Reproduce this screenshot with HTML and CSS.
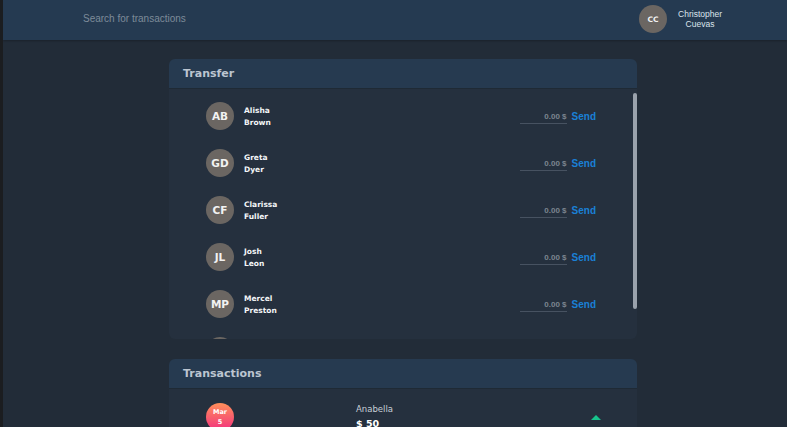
FILE: index.html
```html
<!DOCTYPE html>
<html>
<head>
<meta charset="utf-8">
<link rel="stylesheet" href="styles.css">
</head>
<body>
<div class="app">
  <header class="topbar">
    <div class="search">Search for transactions</div>
    <div class="user">
      <div class="avatar user-avatar">CC</div>
      <div class="user-name">Christopher<br>Cuevas</div>
    </div>
  </header>
  <main class="main">
    <section class="card">
      <div class="card-head">Transfer</div>
      <div class="scroll-wrap">
        <div class="card-body transfer-list">
          <div class="row">
            <div class="person"><div class="avatar">AB</div><div class="pname">Alisha<br>Brown</div></div>
            <div class="action"><div class="amount">0.00 $</div><div class="send">Send</div></div>
          </div>
          <div class="row">
            <div class="person"><div class="avatar">GD</div><div class="pname">Greta<br>Dyer</div></div>
            <div class="action"><div class="amount">0.00 $</div><div class="send">Send</div></div>
          </div>
          <div class="row">
            <div class="person"><div class="avatar">CF</div><div class="pname">Clarissa<br>Fuller</div></div>
            <div class="action"><div class="amount">0.00 $</div><div class="send">Send</div></div>
          </div>
          <div class="row">
            <div class="person"><div class="avatar">JL</div><div class="pname">Josh<br>Leon</div></div>
            <div class="action"><div class="amount">0.00 $</div><div class="send">Send</div></div>
          </div>
          <div class="row">
            <div class="person"><div class="avatar">MP</div><div class="pname">Mercel<br>Preston</div></div>
            <div class="action"><div class="amount">0.00 $</div><div class="send">Send</div></div>
          </div>
          <div class="row">
            <div class="person"><div class="avatar"></div></div>
          </div>
        </div>
        <div class="scroll-thumb"></div>
      </div>
    </section>
    <section class="card">
      <div class="card-head">Transactions</div>
      <div class="card-body tx-list">
        <div class="tx">
          <div class="date">Mar<br>5</div>
          <div class="tx-info"><div class="tx-name">Anabella</div><div class="tx-sum">$ 50</div></div>
          <div class="tx-arrow"></div>
        </div>
      </div>
    </section>
  </main>
</div>
</body>
</html>
```
FILE: styles.css
```css
html, body {
  margin: 0;
  padding: 0;
  height: 100%;
  overflow: hidden;
}
body {
  background: #222c38;
  border-left: 3px solid #1b1d20;
  font-family: "Liberation Sans", Arial, sans-serif;
}
.app {
  display: flex;
  flex-direction: column;
}
.topbar {
  height: 40px;
  background: #253a51;
  display: flex;
  align-items: center;
  padding-left: 80px;
  box-shadow: 0 1px 2px rgba(0,0,0,0.25);
}
.search {
  color: #7d8b99;
  font-size: 10px;
  flex: 1;
  margin-top: -3px;
}
.user {
  display: flex;
  align-items: center;
  gap: 11px;
  margin-right: 65px;
  margin-top: -2px;
}
.avatar {
  width: 28px;
  height: 28px;
  border-radius: 50%;
  background: #6b6662;
  color: #f2f2f2;
  font-family: "DejaVu Sans", sans-serif;
  font-weight: 700;
  font-size: 10.5px;
  display: flex;
  align-items: center;
  justify-content: center;
  flex-shrink: 0;
}
.user-avatar {
  font-size: 7.5px;
}
.user-name {
  color: #dce4ec;
  font-size: 8.5px;
  line-height: 10px;
  text-align: center;
}
.main {
  display: flex;
  flex-direction: column;
  gap: 20px;
  padding-top: 19px;
  padding-left: 166px;
  width: 468px;
}
.card {
  display: flex;
  flex-direction: column;
}
.card-head {
  height: 29px;
  background: #263a50;
  border-radius: 6px 6px 0 0;
  color: #bcc5d0;
  font-family: "DejaVu Sans", sans-serif;
  font-weight: 700;
  font-size: 11px;
  display: flex;
  align-items: center;
  padding-left: 14px;
  border-bottom: 1px solid #1f2a35;
}
.card-body {
  background: #25303e;
}
.scroll-wrap {
  position: relative;
}
.transfer-list {
  height: 250px;
  overflow: hidden;
  padding: 13px 0 3px 37px;
  box-sizing: border-box;
  display: flex;
  flex-direction: column;
  gap: 19px;
  border-radius: 0 0 6px 6px;
}
.scroll-thumb {
  position: absolute;
  right: 0;
  top: 4px;
  width: 4px;
  height: 216px;
  border-radius: 2px;
  background: #9aa2ac;
}
.row {
  display: flex;
  align-items: center;
  justify-content: space-between;
  padding-right: 41px;
  height: 28px;
  flex-shrink: 0;
}
.person {
  display: flex;
  align-items: center;
  gap: 10px;
}
.pname {
  color: #f4f6f8;
  font-family: "DejaVu Sans", sans-serif;
  font-weight: 700;
  font-size: 7.5px;
  line-height: 11.5px;
  margin-top: 1px;
}
.action {
  display: flex;
  align-items: center;
  gap: 5px;
}
.amount {
  width: 47px;
  text-align: right;
  color: #7c8590;
  font-size: 8px;
  font-weight: 700;
  border-bottom: 1px solid #475261;
  padding-bottom: 2px;
  margin-top: 4px;
}
.send {
  color: #1a80d6;
  font-size: 10px;
  font-weight: 700;
}
.tx-list {
  height: 60px;
}
.tx {
  display: flex;
  align-items: flex-start;
  padding: 14px 37px 0 37px;
}
.date {
  width: 28px;
  height: 28px;
  border-radius: 50%;
  background: linear-gradient(180deg, #ff8f5a 0%, #f2317f 100%);
  color: #fff;
  font-family: "DejaVu Sans", sans-serif;
  font-weight: 700;
  font-size: 6.5px;
  line-height: 10px;
  text-align: center;
  display: flex;
  align-items: center;
  justify-content: center;
  flex-shrink: 0;
}
.tx-info {
  margin-left: 122px;
  margin-top: 0;
  flex: 1;
}
.tx-name {
  color: #c7cfd8;
  font-family: "DejaVu Sans", sans-serif;
  font-size: 8.5px;
  line-height: 12px;
}
.tx-sum {
  color: #ffffff;
  font-family: "DejaVu Sans", sans-serif;
  font-weight: 700;
  font-size: 9.5px;
  margin-top: 3px;
}
.tx-arrow {
  width: 0;
  height: 0;
  border-left: 5px solid transparent;
  border-right: 5px solid transparent;
  border-bottom: 5px solid #17c38c;
  margin-top: 12px;
  margin-right: -1px;
}
```
